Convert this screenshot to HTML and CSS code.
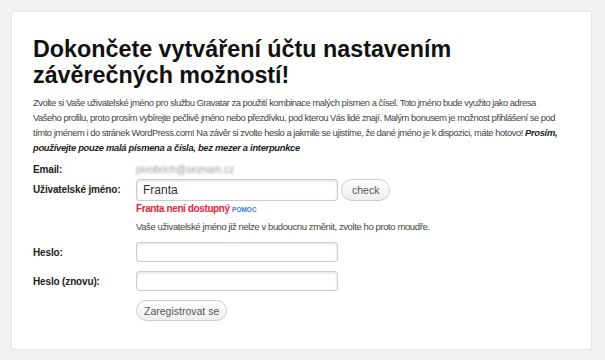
FILE: index.html
```html
<!DOCTYPE html>
<html lang="cs">
<head>
    <meta charset="UTF-8">
    <title>Dokončete vytváření účtu</title>
    <link rel="stylesheet" href="styles.css">
</head>
<body>
    <div class="signup-card">
        <h1>Dokončete vytváření účtu nastavením závěrečných možností!</h1>

        <p class="intro">Zvolte si Vaše uživatelské jméno pro službu Gravatar za použití kombinace malých písmen a čísel. Toto jméno bude využito jako adresa Vašeho profilu, proto prosím vybírejte pečlivě jméno nebo přezdívku, pod kterou Vás lidé znají. Malým bonusem je možnost přihlášení se pod tímto jménem i do stránek WordPress.com! Na závěr si zvolte heslo a jakmile se ujistíme, že dané jméno je k dispozici, máte hotovo! <em>Prosím, používejte pouze malá písmena a čísla, bez mezer a interpunkce</em></p>

        <form class="signup-form">
            <div class="form-row email-row">
                <label>Email:</label>
                <span class="email-value">pivobrich@seznam.cz</span>
            </div>

            <div class="form-row">
                <label for="username">Uživatelské jméno:</label>
                <div class="field">
                    <div class="input-line">
                        <input type="text" id="username" value="Franta">
                        <button type="button" class="pill-btn">check</button>
                    </div>
                    <div class="error-msg">Franta není dostupný <a href="#">POMOC</a></div>
                    <div class="hint">Vaše uživatelské jméno již nelze v budoucnu změnit, zvolte ho proto moudře.</div>
                </div>
            </div>

            <div class="form-row">
                <label for="pass1">Heslo:</label>
                <input type="password" id="pass1" class="pass">
            </div>

            <div class="form-row">
                <label for="pass2">Heslo (znovu):</label>
                <input type="password" id="pass2" class="pass">
            </div>

            <div class="form-row">
                <span class="spacer"></span>
                <button type="button" class="pill-btn submit-btn">Zaregistrovat se</button>
            </div>
        </form>
    </div>
</body>
</html>
```

FILE: styles.css
```css
body {
    background: #f1f1f1;
    color: #333;
    font-family: 'Liberation Sans', Arial, sans-serif;
    margin: 0;
    padding: 11px 13px 10px 11px;
}

.signup-card {
    background: #fff;
    border: 1px solid #e6e6e6;
    border-radius: 3px;
    padding: 24px 21px 31px 21px;
    height: 282px;
}

h1 {
    color: #111;
    font-size: 23.3px;
    line-height: 26px;
    margin: 0 0 7px 0;
    width: 440px;
}

.intro {
    font-size: 9.4px;
    letter-spacing: -0.46px;
    line-height: 15px;
    margin: 0 0 8px 0;
    max-width: 526px;
    color: #444;
}

.intro em {
    color: #222;
    font-weight: bold;
    letter-spacing: -0.3px;
}

.form-row {
    display: flex;
    align-items: flex-start;
    margin-bottom: 8px;
}

.email-row {
    margin-bottom: 2px;
}

.form-row label,
.spacer {
    width: 103px;
    flex: none;
    font-size: 10px;
    font-weight: bold;
    letter-spacing: -0.15px;
    color: #222;
    line-height: 21px;
}

.email-row label,
.email-value {
    line-height: 14px;
}

.email-value {
    font-size: 10px;
    color: #999;
    filter: blur(1.2px);
}

input {
    width: 188px;
    height: 16px;
    padding: 2px 6px;
    border: 1px solid #ccc;
    border-radius: 3px;
    box-shadow: inset 0 1px 3px rgba(0, 0, 0, 0.12);
    font-family: 'Liberation Sans', Arial, sans-serif;
    font-size: 12px;
    color: #333;
    margin: 0;
}

input.pass {
    height: 14px;
}

.input-line {
    display: flex;
    gap: 3px;
}

.pill-btn {
    background: linear-gradient(#fff, #eee);
    border: 1px solid #ccc;
    border-radius: 11px;
    color: #555;
    font-family: 'Liberation Sans', Arial, sans-serif;
    font-size: 10.5px;
    height: 22px;
    padding: 0 10px;
    cursor: pointer;
}

.error-msg {
    color: #f0213d;
    font-size: 10px;
    font-weight: bold;
    letter-spacing: -0.4px;
    margin-top: 1px;
    line-height: 14px;
}

.error-msg a {
    color: #3d7cc9;
    font-size: 6.5px;
    letter-spacing: 0;
    text-decoration: none;
}

.hint {
    font-size: 9.5px;
    letter-spacing: -0.4px;
    color: #444;
    margin-top: 3px;
    line-height: 14px;
}

.submit-btn {
    height: 21px;
    padding: 0 7px;
}
```
